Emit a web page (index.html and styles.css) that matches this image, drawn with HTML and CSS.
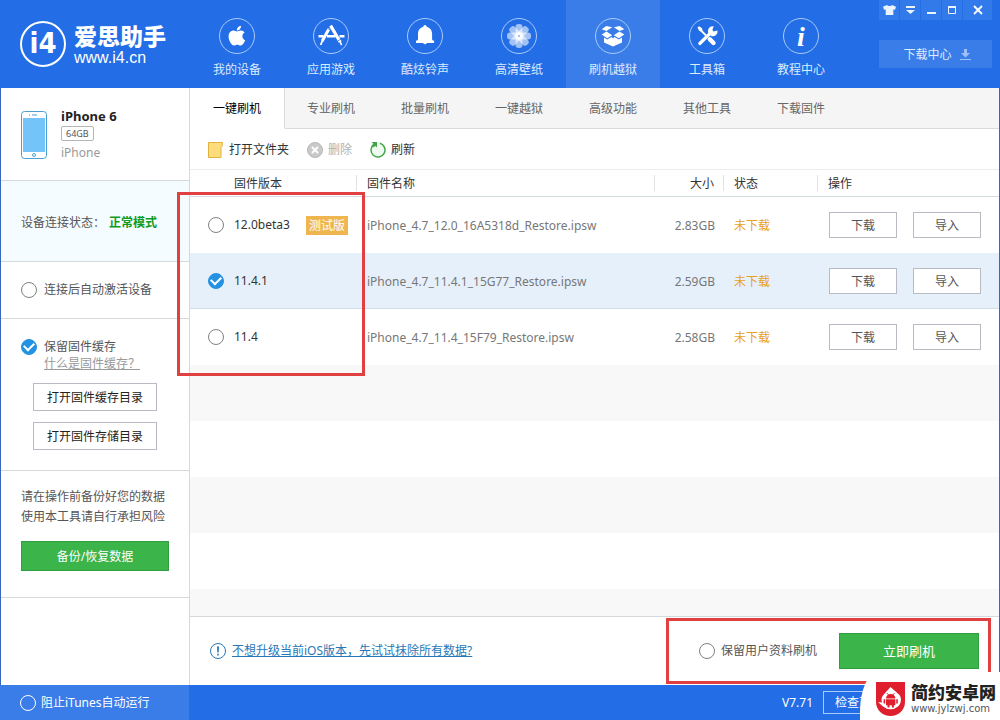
FILE: index.html
```html
<!DOCTYPE html>
<html lang="zh-CN">
<head>
<meta charset="utf-8">
<meta name="viewport" content="width=device-width, initial-scale=1">
<title>爱思助手</title>
<link rel="stylesheet" href="styles.css">
</head>
<body>
<div class="app">
  <header class="header">
    <div class="brand">
      <div class="brand-mark">i4</div>
      <div class="brand-words">
        <div class="brand-name">爱思助手</div>
        <div class="brand-url">www.i4.cn</div>
      </div>
    </div>
    <nav class="nav">
      <a class="nav-item" href="#">
        <svg class="nav-icon" viewBox="0 0 36 36"><circle class="ring" cx="18" cy="18" r="17.5"/><path fill="#fff" transform="translate(9.4 6.4) scale(.044)" d="M318.700 268.700c-.2-36.700 16.400-64.400 50-84.800-18.800-26.900-47.200-41.700-84.700-44.600-35.500-2.800-74.300 20.700-88.500 20.700-15 0-49.400-19.700-76.400-19.700C63.300 141.200 4 184.800 4 273.500q0 39.300 14.400 81.200c12.800 36.700 59 126.700 107.200 125.200 25.200-.6 43-17.900 75.800-17.900 31.800 0 48.300 17.900 76.400 17.900 48.600-.7 90.400-82.500 102.600-119.300-65.200-30.700-61.700-90-61.700-91.900zm-56.600-164.200c27.300-32.400 24.800-61.900 24-72.500-24.100 1.400-52 16.400-67.900 34.900-17.500 19.800-27.800 44.300-25.600 71.900 26.100 2 49.900-11.400 69.500-34.300z"/></svg>
        <span>我的设备</span>
      </a>
      <a class="nav-item" href="#">
        <svg class="nav-icon" viewBox="0 0 36 36"><circle class="ring" cx="18" cy="18" r="17.500"/><g stroke="#fff" fill="none"><path stroke-width="2.600" d="M5.500 18.200h5M14 18.200h8.500M26.500 18.200h5"/><path stroke-width="3" d="M16.200 10.500L9.200 23"/><path stroke-width="1.800" d="M9.400 22.800L7.600 27"/><path stroke-width="3.200" d="M17.600 7.600L27.200 24"/><path stroke-width="1.600" d="M27 23.500l1.600 3.600"/></g><path stroke="#236ee6" stroke-width=".8" d="M14.300 10.200l3.400 2M25 22.800l3-1.700"/></svg>
        <span>应用游戏</span>
      </a>
      <a class="nav-item" href="#">
        <svg class="nav-icon" viewBox="0 0 36 36"><circle class="ring" cx="18" cy="18" r="17.500"/><path fill="#fff" d="M18 7c1 0 1.600.7 1.600 1.800 3.500.8 5.500 3.600 5.500 7.200v5.200c0 .8.500 1.300 2 1.500V25h-7.300a1.900 1.900 0 0 1-3.600 0H9v-2.300c1.400-.2 2-.7 2-1.500V16c0-3.600 2-6.400 5.400-7.200C16.400 7.700 17 7 18 7z"/></svg>
        <span>酷炫铃声</span>
      </a>
      <a class="nav-item" href="#">
        <svg class="nav-icon" viewBox="0 0 36 36"><circle class="ring" cx="18" cy="18" r="17.500"/><g fill="#fff" fill-opacity=".58"><rect id="petal" x="14.500" y="6" width="7" height="11.500" rx="3"/><use href="#petal" transform="rotate(45 18 18)"/><use href="#petal" transform="rotate(90 18 18)"/><use href="#petal" transform="rotate(135 18 18)"/><use href="#petal" transform="rotate(180 18 18)"/><use href="#petal" transform="rotate(225 18 18)"/><use href="#petal" transform="rotate(270 18 18)"/><use href="#petal" transform="rotate(315 18 18)"/></g><circle cx="18" cy="18" r="4" fill="#fff" fill-opacity=".7"/><circle cx="18" cy="18" r="1" fill="#8fb5f3"/></svg>
        <span>高清壁纸</span>
      </a>
      <a class="nav-item nav-item-active" href="#">
        <svg class="nav-icon" viewBox="0 0 36 36"><circle class="ring" cx="18" cy="18" r="17.500"/><g fill="#fff"><path d="M11.200 8l6 1.200L11.500 13l-4.800-1.800zM24.800 8l-6 1.200 5.700 3.800 4.800-1.800zM11.500 13.600l5.700 3.700-5 2.900-5.500-3.600zM24.500 13.600l-5.700 3.700 5 2.900 5.500-3.600z"/><path d="M9 19.500l3.200 1.900 4.400-2.400 1.400 1.400 1.400-1.400 4.400 2.400 3.200-1.900v5L18 28.500l-9-4z"/></g></svg>
        <span>刷机越狱</span>
      </a>
      <a class="nav-item" href="#">
        <svg class="nav-icon" viewBox="0 0 36 36"><circle class="ring" cx="18" cy="18" r="17.500"/><g stroke="#fff" fill="none" stroke-linecap="round"><path stroke-width="1.800" d="M11 11.500l7 7"/><path stroke-width="4.400" d="M20.800 21.300l3.700 3.700"/><path stroke-width="3.200" d="M21.500 15L10.800 25.500"/></g><path fill="#fff" d="M8.500 9.500l1.600-1.300 2.900 2 .5 2.300-1.300 1-2.100-.7zM24.700 8.300l-1.300 3.800 1.300 1.500 3.800-1.200a5 5 0 0 1-6 5.800l-3.200-3.200a5 5 0 0 1 5.400-6.700z"/></svg>
        <span>工具箱</span>
      </a>
      <a class="nav-item" href="#">
        <svg class="nav-icon" viewBox="0 0 36 36"><circle class="ring" cx="18" cy="18" r="17.500"/><text class="info-letter" x="18" y="28" text-anchor="middle">i</text></svg>
        <span>教程中心</span>
      </a>
    </nav>
    <div class="header-side">
      <div class="window-controls">
        <button type="button" class="window-button" aria-label="皮肤"><svg width="13" height="10" viewBox="0 0 13 10"><path fill="#e9f4ff" d="M4 0c1 1.300 4 1.300 5 0l4 1.700-1 3-1.700-.3V10H2.700V4.400L1 4.700l-1-3z"/></svg></button>
        <button type="button" class="window-button" aria-label="菜单"><svg width="9" height="8" viewBox="0 0 9 8"><path fill="#e9f4ff" d="M0 0h9v2H0zM0 4h9L4.500 8z"/></svg></button>
        <button type="button" class="window-button" aria-label="最小化"><svg width="9" height="8" viewBox="0 0 9 8"><path fill="#e9f4ff" d="M0 6h9v2H0z"/></svg></button>
        <button type="button" class="window-button" aria-label="最大化"><svg width="8" height="8" viewBox="0 0 8 8"><path fill="none" stroke="#e9f4ff" d="M.5 1h7v6.500h-7z"/><path fill="#e9f4ff" d="M0 0h8v2H0z"/></svg></button>
        <button type="button" class="window-button window-close" aria-label="关闭"><svg width="10" height="10" viewBox="0 0 10 10"><path stroke="#fff" stroke-width="1.800" d="M1 1l8 8M9 1L1 9"/></svg></button>
      </div>
      <button type="button" class="download-center">下载中心 <svg width="11" height="12" viewBox="0 0 11 12"><path fill="#9cc0f7" d="M4 0h3v4h3L5.500 8.500 1 4h3zM0 10h11v1H0z"/></svg></button>
    </div>
  </header>

  <div class="body">
    <aside class="sidebar">
      <section class="panel device">
        <svg width="26" height="48" viewBox="0 0 26 48"><rect x=".5" y=".5" width="25" height="47" rx="3" fill="#fff" stroke="#4a9fd0"/><path fill="#74c4fa" d="M2 7h22v34H2z"/><path stroke="#4a9fd0" d="M8 4h1M11 4h5"/><circle cx="13" cy="44" r="1.500" fill="none" stroke="#4a9fd0"/></svg>
        <div class="device-info">
          <div class="device-name">iPhone 6</div>
          <div class="device-capacity">64GB</div>
          <div class="device-type">iPhone</div>
        </div>
      </section>
      <section class="panel status">设备连接状态：<strong>正常模式</strong></section>
      <section class="panel activate">
        <label class="option"><input type="checkbox" class="round">连接后自动激活设备</label>
      </section>
      <section class="panel cache">
        <label class="option"><input type="checkbox" class="round" checked>保留固件缓存</label>
        <a class="cache-help" href="#">什么是固件缓存？</a>
        <button type="button" class="button cache-button">打开固件缓存目录</button>
        <button type="button" class="button cache-button">打开固件存储目录</button>
      </section>
      <section class="panel backup">
        <p class="backup-note">请在操作前备份好您的数据<br>使用本工具请自行承担风险</p>
        <button type="button" class="button-green backup-button">备份/恢复数据</button>
      </section>
    </aside>

    <main class="main">
      <nav class="tabs">
        <a class="tab tab-active" href="#">一键刷机</a>
        <a class="tab" href="#">专业刷机</a>
        <a class="tab" href="#">批量刷机</a>
        <a class="tab" href="#">一键越狱</a>
        <a class="tab" href="#">高级功能</a>
        <a class="tab" href="#">其他工具</a>
        <a class="tab" href="#">下载固件</a>
      </nav>
      <div class="toolbar">
        <button type="button" class="tool"><svg width="16" height="16" viewBox="0 0 16 16"><path fill="#fddc7b" stroke="#dfb240" d="M.5.5h14l-.5 4-1 1v10H.5z"/></svg>打开文件夹</button>
        <button type="button" class="tool tool-muted" disabled><svg width="16" height="16" viewBox="0 0 16 16"><circle cx="8" cy="8" r="7.500" fill="#c9c9c9" stroke="#b7b7b7"/><path stroke="#fff" stroke-width="2" d="M5 5l6 6M11 5l-6 6"/></svg>删除</button>
        <button type="button" class="tool"><svg width="16" height="16" viewBox="0 0 16 16"><path fill="#effaef" stroke="#41a548" stroke-width="1.500" d="M10 1.300A7 7 0 1 1 3.800 2.400"/><path fill="#41a548" d="M1.500 0H7v5.500L5.300 3.900 3 5.500 1.800 4.200 3.500 2z"/></svg>刷新</button>
      </div>
      <div class="list">
        <table class="table">
          <thead>
            <tr><th class="col-version" scope="col">固件版本</th><th scope="col">固件名称</th><th class="col-size" scope="col">大小</th><th class="col-status" scope="col">状态</th><th class="col-actions" scope="col">操作</th></tr>
          </thead>
          <tbody>
            <tr>
              <td><label class="version"><input type="radio" name="firmware" class="round">12.0beta3<span class="beta">测试版</span></label></td>
              <td class="file">iPhone_4.7_12.0_16A5318d_Restore.ipsw</td><td class="size">2.83GB</td><td class="pending">未下载</td>
              <td><div class="actions"><button type="button" class="button">下载</button><button type="button" class="button">导入</button></div></td>
            </tr>
            <tr class="selected">
              <td><label class="version"><input type="radio" name="firmware" class="round" checked>11.4.1</label></td>
              <td class="file">iPhone_4.7_11.4.1_15G77_Restore.ipsw</td><td class="size">2.59GB</td><td class="pending">未下载</td>
              <td><div class="actions"><button type="button" class="button">下载</button><button type="button" class="button">导入</button></div></td>
            </tr>
            <tr>
              <td><label class="version"><input type="radio" name="firmware" class="round">11.4</label></td>
              <td class="file">iPhone_4.7_11.4_15F79_Restore.ipsw</td><td class="size">2.58GB</td><td class="pending">未下载</td>
              <td><div class="actions"><button type="button" class="button">下载</button><button type="button" class="button">导入</button></div></td>
            </tr>
          </tbody>
        </table>
        <div class="stripes"></div>
        <div class="highlight highlight-versions"></div>
      </div>
      <div class="flash-bar">
        <svg class="notice" width="16" height="16" viewBox="0 0 16 16"><circle cx="8" cy="8" r="7.500" fill="none" stroke="#2878b8"/><path fill="#2878b8" d="M7 3.500h2l-.3 6H7.300zM7.200 10.800h1.600v1.600H7.200z"/></svg>
        <a class="erase-link" href="#">不想升级当前iOS版本，先试试抹除所有数据?</a>
        <label class="option keep-data"><input type="checkbox" class="round">保留用户资料刷机</label>
        <button type="button" class="button-green flash-button">立即刷机</button>
        <div class="highlight highlight-flash"></div>
      </div>
    </main>
  </div>

  <footer class="footer">
    <div class="footer-left"><label class="option"><input type="checkbox" class="round round-light">阻止iTunes自动运行</label></div>
    <div class="footer-right"><span>V7.71</span><button type="button" class="update">检查更新</button></div>
  </footer>

  <div class="watermark">
    <svg width="29" height="34" viewBox="0 0 29 34"><path fill="#df1f2d" d="M0 0h29v20a14.500 14 0 0 1-29 0z"/><path fill="#fff" d="M14.500 5L23 12.500c3 3 2.500 9-1 12a11.500 11.500 0 0 1-15 0L2 20l4 .5c-1-3-.5-5.500 1.500-7.700z"/><path fill="#df1f2d" d="M10 16.500a4.700 4.500 0 0 1 9.400 0zM10 17.300h9.400v6H10zM7.600 17.300h1.600v4.200H7.600zM20.200 17.300h1.600v4.200h-1.600zM11.500 23h2v2.500h-2zM15.900 23h2v2.500h-2z"/><path stroke="#df1f2d" stroke-width=".8" d="M11 11l1.500 2M18.500 11L17 13"/></svg>
    <div class="watermark-words">
      <div class="watermark-name">简约安卓网</div>
      <div class="watermark-url">www.jylzwj.com</div>
    </div>
  </div>
</div>
</body>
</html>
```

FILE: styles.css
```css
* { box-sizing: border-box; }

body {
  margin: 0;
  font: 12px/20px "Noto Sans", "Noto Sans CJK SC", sans-serif;
  color: #555;
}

a { color: inherit; text-decoration: none; }

button {
  margin: 0;
  padding: 0;
  border: 0;
  background: none;
  color: inherit;
  font: inherit;
  cursor: pointer;
}

svg { display: block; flex: none; }

.app {
  position: relative;
  display: flex;
  flex-direction: column;
  min-height: 100vh;
  background: #fff;
}

/* Header */
.header {
  display: flex;
  height: 88px;
  background: #236ee6;
  color: #dcebff;
}

.brand {
  display: flex;
  align-items: center;
  gap: 8px;
  width: 190px;
  padding-left: 20px;
  color: #fff;
}

.brand-mark {
  width: 46px;
  height: 46px;
  border: 2px solid #fff;
  border-radius: 50%;
  text-align: center;
  font: bold 29px/41px "DejaVu Sans Condensed", "DejaVu Sans", sans-serif;
}

.brand-name { font: 900 23px/28px "Noto Sans CJK SC", sans-serif; white-space: nowrap; }
.brand-url { font: 16px/18px "Liberation Sans", sans-serif; }

.nav { display: flex; }

.nav-item {
  display: flex;
  flex-direction: column;
  align-items: center;
  gap: 6px;
  width: 94px;
  padding-top: 18px;
}

.nav-item-active { background: #3a7de9; }
.nav-icon { width: 36px; height: 36px; }
.ring { fill: none; stroke: #a9cbfa; }
.info-letter { fill: #fff; font: italic bold 28px "Liberation Serif", serif; }

.header-side {
  display: flex;
  flex-direction: column;
  align-items: flex-end;
  gap: 20px;
  margin-left: auto;
  padding-right: 8px;
}

.window-controls { display: flex; gap: 1px; }

.window-button {
  display: flex;
  align-items: center;
  justify-content: center;
  width: 20px;
  height: 20px;
  background: #327ae9;
}

.window-close { width: 29px; }

.download-center {
  display: flex;
  align-items: center;
  justify-content: center;
  gap: 8px;
  width: 113px;
  height: 28px;
  padding: 2px 0 0 3px;
  background: #3a7de9;
}

/* Body */
.body {
  display: flex;
  flex: 1;
  border: solid #3768bb;
  border-width: 0 1px;
}

.sidebar { width: 189px; border-right: 1px solid #d5d9dc; }
.panel { padding: 0 20px; border-bottom: 1px solid #d5d9dc; }

.device { display: flex; gap: 14px; padding-top: 18px; padding-bottom: 16px; }
.device svg { margin-top: 5px; }
.device-info { display: flex; flex-direction: column; align-items: flex-start; }
.device-name { font-size: 13px; font-weight: bold; color: #222; }

.device-capacity {
  padding: 0 4px;
  border: 1px solid #b5b5b5;
  border-radius: 2px;
  font-size: 9px;
  line-height: 13px;
}

.device-type { line-height: 23px; color: #999; }

.status { padding-top: 32px; padding-bottom: 28px; background: #f5fcff; white-space: nowrap; }
.status strong { color: #119a22; margin-left: 4px; }
.activate { padding-top: 18px; padding-bottom: 18px; }
.option { display: flex; align-items: center; gap: 7px; white-space: nowrap; }

.round {
  appearance: none;
  display: grid;
  place-items: center;
  flex: none;
  width: 16px;
  height: 16px;
  margin: 0;
  border: 1px solid #808080;
  border-radius: 50%;
}

.round:checked { border-color: #2492e2; background: #2492e2; }

.round:checked::after {
  content: "";
  width: 8px;
  height: 5px;
  margin-bottom: 3px;
  border: solid #fff;
  border-width: 0 0 2px 2px;
  transform: rotate(-45deg);
}

.round-light { border-color: #fff; }

.cache { padding-top: 18px; padding-bottom: 20px; }
.cache-help { display: block; margin: -1px 0 11px 23px; line-height: 16px; color: #999; text-decoration: underline; white-space: nowrap; }

.button {
  width: 68px;
  height: 26px;
  padding-top: 1px;
  border: 1px solid #b8bcc2;
  background: #fff;
}

.cache-button { display: block; width: 124px; height: 28px; margin: 0 auto 11px 12px; color: #222; }
.cache-button:last-child { margin-bottom: 0; }

.backup { padding-top: 16px; padding-bottom: 26px; }
.backup-note { margin: 0 0 14px; white-space: nowrap; }

.button-green { border: 1px solid #2f9e3e; background: #3bb44a; color: #fff; }
.backup-button { width: 100%; height: 30px; padding-top: 1px; }

/* Main column */
.main { display: flex; flex: 1; flex-direction: column; min-width: 0; }
.tabs { display: flex; background: #f5f5f5; }

.tabs::after { content: ""; flex: 1; border-bottom: 1px solid #d9dcde; }

.tab {
  width: 94px;
  padding: 11px 2px 9px 0;
  border-bottom: 1px solid #d9dcde;
  text-align: center;
  color: #666;
}

.tab-active { width: 95px; padding-right: 0; border-right: 1px solid #d9dcde; border-bottom-color: #fff; background: #fff; color: #000; }

.toolbar { display: flex; gap: 18px; padding: 10px 18px 9px; border-bottom: 1px solid #ececec; }
.tool { display: flex; align-items: center; gap: 5px; padding-top: 1px; color: #333; }
.tool-muted { color: #b0b0b0; }

.list { position: relative; display: flex; flex: 1; flex-direction: column; }
.table { width: 100%; border-collapse: separate; border-spacing: 0; table-layout: fixed; }

th {
  height: 27px;
  padding: 2px 10px 0;
  border-bottom: 1px solid #d5dce0;
  background: linear-gradient(#dfe3e6, #dfe3e6) right center / 1px 16px no-repeat;
  color: #333;
  font-weight: normal;
  text-align: left;
}

th:last-child { background: none; }
.col-version { width: 167px; padding-left: 44px; }
.col-size { width: 69px; text-align: right; }
.col-status { width: 94px; }
.col-actions { width: 181px; }

td { height: 56px; padding: 2px 10px 0; border-bottom: 1px solid #fff; }
td:first-child { padding: 1px 0 0 18px; }
td:last-child { padding: 1px 0 0 11px; }
tr.selected td { background: #e6f0fb; border-bottom-color: #d3dfe8; }

.version { display: flex; align-items: center; gap: 10px; color: #333; white-space: nowrap; }
.beta { margin-left: 6px; padding: 0 3px; background: #efb64f; color: #fff; line-height: 19px; }
.file { color: #777; white-space: nowrap; }
.size { padding-left: 0; padding-right: 9px; text-align: right; color: #777; }
.pending { color: #e8a01c; }
.actions { display: flex; gap: 16px; }

.stripes {
  flex: 1;
  min-height: 56px;
  background: repeating-linear-gradient(#f8f8f8 0 56px, #fff 56px 112px);
}

.flash-bar {
  position: relative;
  display: flex;
  align-items: center;
  height: 69px;
  padding: 0 20px;
  border-top: 1px solid #d5d9dc;
}

.erase-link { margin-left: 6px; color: #2878b8; text-decoration: underline; white-space: nowrap; }
.keep-data { gap: 6px; margin-left: auto; }
.flash-button { width: 140px; height: 36px; margin-left: 22px; font-size: 13px; }

/* Marker frames drawn over the list and the flash bar */
.highlight { position: absolute; border: 3px solid #e0403f; pointer-events: none; }
.highlight-versions { top: 22px; left: -13px; width: 188px; height: 184px; }
.highlight-flash { top: 1px; right: 8px; width: 325px; height: 66px; }

/* Footer */
.footer { display: flex; height: 35px; background: #236ee6; color: #fff; }
.footer-left { display: flex; align-items: center; width: 189px; padding-left: 20px; background: #3a7ce8; }
.footer-left .option { gap: 5px; }
.footer-right { display: flex; align-items: center; gap: 10px; margin-left: auto; padding-right: 105px; }
.update { width: 72px; height: 23px; border: 1px solid #a9cbfa; }

/* Site badge in the window corner */
.watermark {
  position: absolute;
  right: 0;
  bottom: 0;
  display: flex;
  align-items: center;
  gap: 6px;
  width: 140px;
  height: 48px;
  padding: 6px 0 0 16px;
  border-top-left-radius: 18px 40px;
  background: #fff;
}

.watermark-name { font: 900 17px/20px "Noto Sans CJK SC", sans-serif; color: #222; white-space: nowrap; }
.watermark-url { font: 10px/14px "DejaVu Sans", sans-serif; color: #555; }
```
